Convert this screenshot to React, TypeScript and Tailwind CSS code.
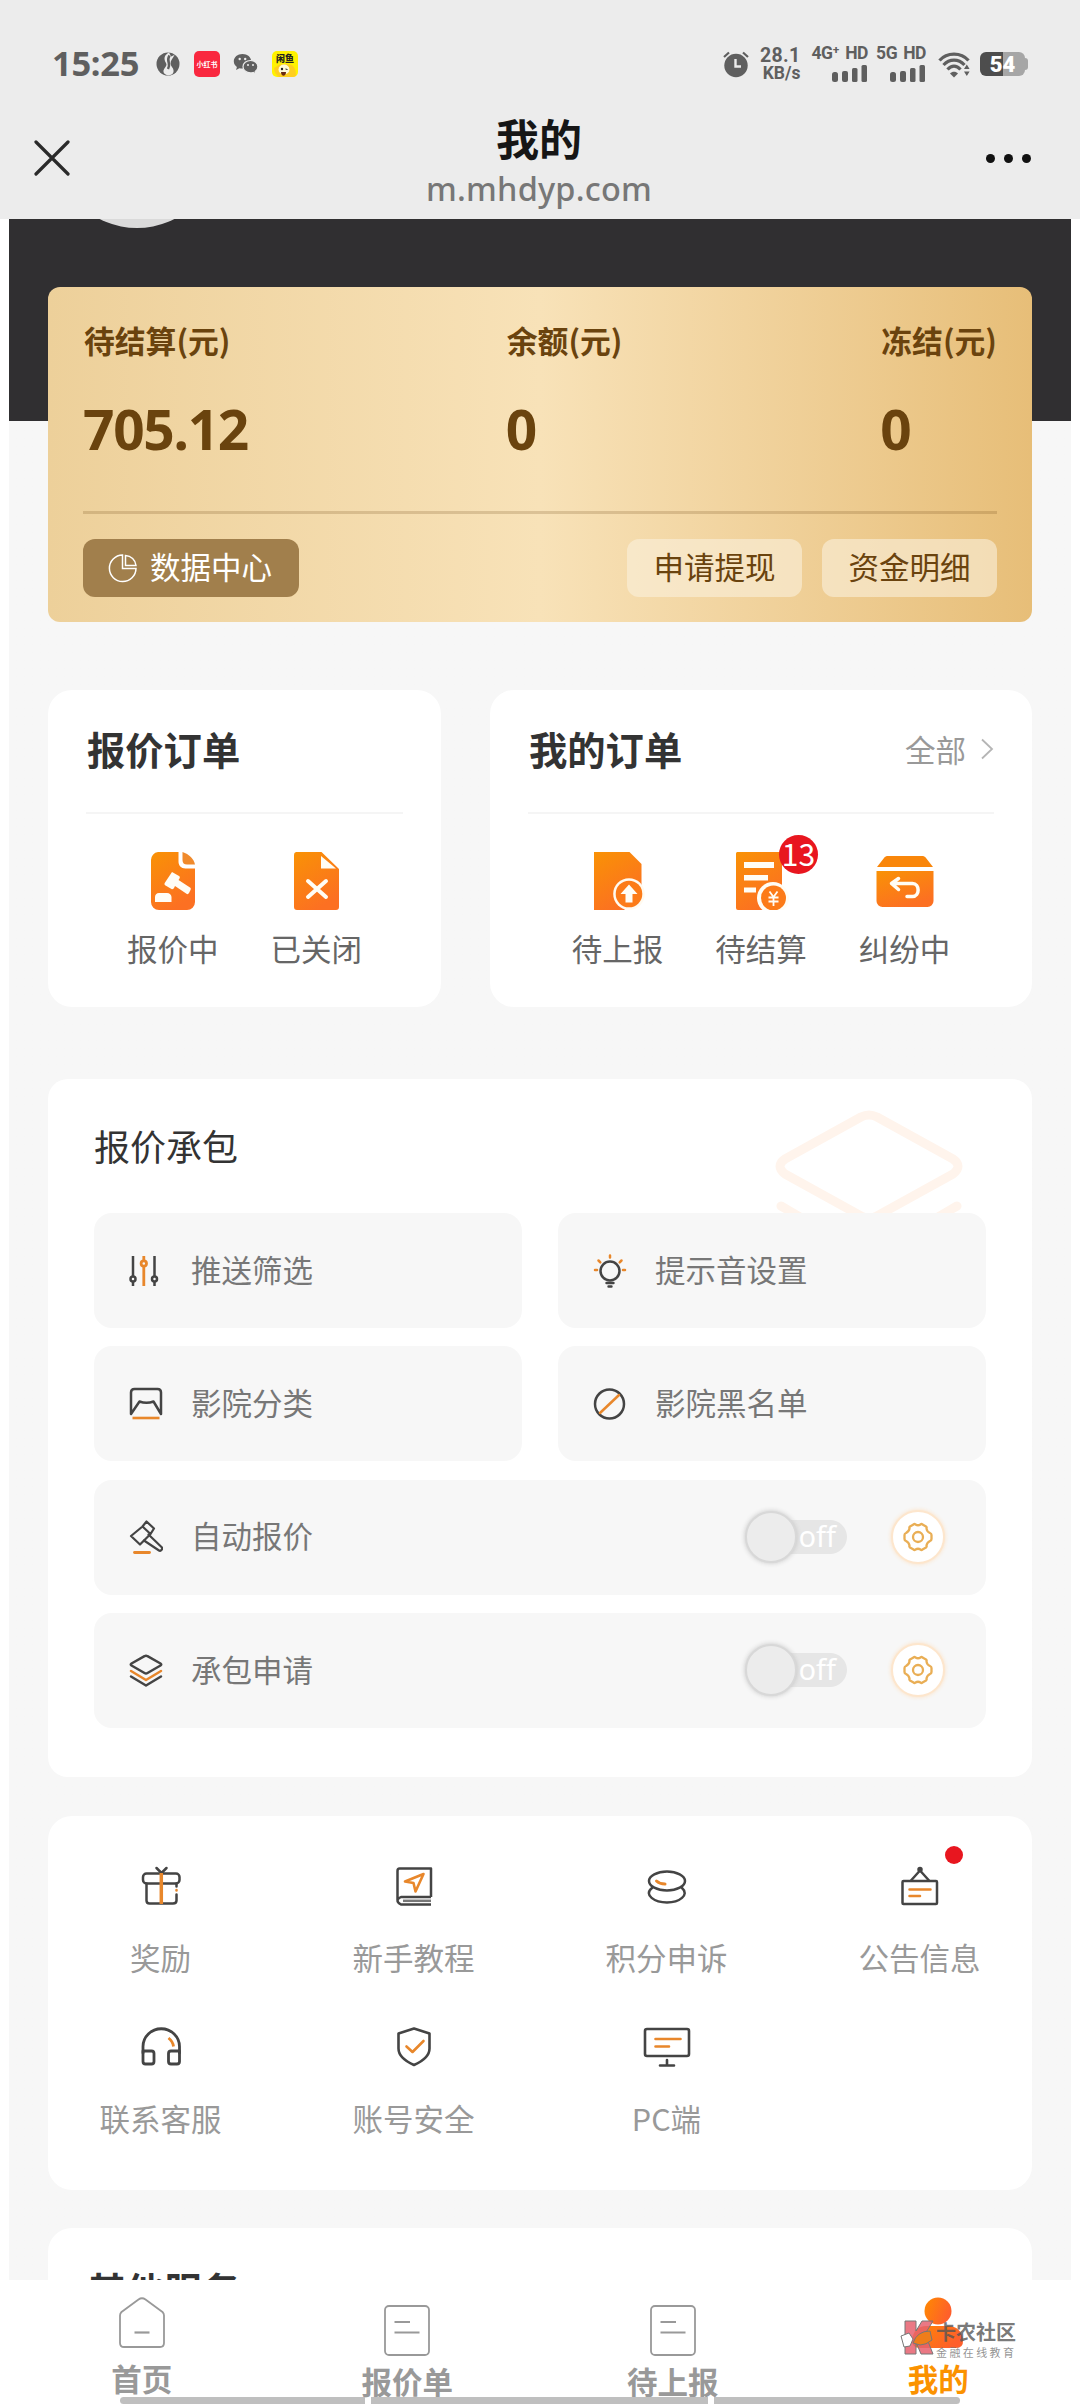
import type { ReactNode } from 'react'

const DARK = '#444444'
const ORANGE = '#e8872b'

/* ---------- STATUS BAR ---------- */

function Signal({ label, sup }: { label: string; sup?: string }) {
  return (
    <div className="flex flex-col items-end gap-1">
      <p className="font-['Roboto','Noto_Sans_CJK_SC',sans-serif] text-[17.5px] leading-[15px] font-bold whitespace-nowrap tracking-tight">
        {label}{sup}<span className="ml-1.5">HD</span>
      </p>
      <svg width="36" height="17" viewBox="0 0 36 17" fill="#5f5f5f">
        <rect x="0" y="7" width="6" height="10" rx="2.5" />
        <rect x="10" y="6" width="6" height="11" rx="2" />
        <rect x="20" y="3" width="5.5" height="14" rx="1.5" />
        <rect x="29.5" y="0" width="5.5" height="17" rx="1.5" />
      </svg>
    </div>
  )
}

function StatusBar() {
  return (
    <div className="flex h-[104px] items-center justify-between pt-6 pl-[52px] pr-[52px] text-[#5f5f5f]">
      <div className="flex items-center">
        <span className="w-[90px] pb-0.5 font-['Noto_Sans','Noto_Sans_CJK_SC',sans-serif] text-[34.5px] leading-none font-bold tracking-[-0.3px]">15:25</span>
        <svg className="ml-3.5" width="24" height="26" viewBox="0 0 24 26">
          <circle cx="12" cy="13" r="11.5" fill="#5f5f5f" />
          <path d="M13 1.500C8 4 7.500 8 10 12c2 3.500-3 5-2.500 9 .5 4 9 4.500 10 0 .8-4-3-5.500-3-8.500 0-3 2.500-5.500 4-8.500l-3.500 1.500z" fill="#ececec" />
          <path d="M13.500 4.500c-2 3-1.500 5-.7 7.500.7 2.500.2 4-.8 6" stroke="#5f5f5f" strokeWidth="2.500" fill="none" />
        </svg>
        <div className="ml-3.5 flex h-[26px] w-[26px] items-center justify-center rounded-[5px] bg-[#f9283f]">
          <span className="text-[7px] leading-none font-bold whitespace-nowrap text-white">小红书</span>
        </div>
        <svg className="ml-[13px]" width="26" height="22" viewBox="0 0 26 22">
          <path fill="#5f5f5f" d="M9.500 1C4.500 1 .8 4.200.8 8.300c0 2.300 1.200 4.300 3.100 5.700l-.8 2.900 3.300-1.700c1 .3 2 .4 3.100.4 5 0 8.700-3.200 8.700-7.300S14.500 1 9.500 1z" />
          <path fill="#5f5f5f" stroke="#ececec" strokeWidth="1.200" d="M17.500 7.500c-4.200 0-7.500 2.800-7.500 6.200s3.300 6.200 7.500 6.200c.9 0 1.800-.1 2.600-.4l2.800 1.500-.7-2.500c1.600-1.100 2.700-2.800 2.700-4.800 0-3.400-3.200-6.200-7.400-6.200z" />
          <g fill="#ececec">
            <circle cx="6.700" cy="6" r="1.200" /><circle cx="12.200" cy="6" r="1.200" />
            <circle cx="15" cy="12" r="1" /><circle cx="20" cy="12" r="1" />
          </g>
        </svg>
        <div className="ml-[13px] flex h-[26px] w-[26px] flex-col items-center overflow-hidden rounded-[5px] bg-[#fff200] pt-[3px]">
          <span className="text-[9px] leading-[9px] font-black whitespace-nowrap text-[#222]">闲鱼</span>
          <svg width="24" height="14" viewBox="0 0 24 14">
            <path d="M1 5c3-1 4-4 9-4s7 0 10 2c3 3 3 7 3 11H6C3 12 1 9 1 5z" fill="#ffcf1f" />
            <ellipse cx="11" cy="6.500" rx="5.500" ry="5" fill="#fff9d8" />
            <circle cx="9" cy="6" r="1.200" fill="#222" />
            <path d="M12.500 6l2 .5" stroke="#222" />
            <path d="M8 9h5c0 5-5 5-5 0z" fill="#6b2a10" />
          </svg>
        </div>
      </div>

      <div className="flex items-center">
        <svg width="26" height="27" viewBox="0 0 26 27">
          <circle cx="13" cy="14.500" r="11.700" fill="#5f5f5f" />
          <path d="M1 6l5-4.500M25 6l-5-4.500" stroke="#5f5f5f" strokeWidth="2.200" />
          <path d="M12.500 8v7.500H18" stroke="#ececec" strokeWidth="2.400" fill="none" />
        </svg>
        <div className="ml-[11px] flex w-10 flex-col items-end font-['Roboto','Noto_Sans_CJK_SC',sans-serif] font-bold">
          <span className="text-[19.500px] leading-[18px] tracking-[0.3px]">28.1</span>
          <span className="text-[17.500px] leading-[17px]">KB/s</span>
        </div>
        <div className="ml-[11px]"><Signal label="4G" sup="⁺" /></div>
        <div className="ml-2"><Signal label="5G" /></div>
        <svg className="ml-3" width="33" height="27" viewBox="0 0 33 27">
          <g fill="none" stroke="#5f5f5f" strokeWidth="3.200">
            <path d="M1.500 9.500C9 1 23 1 30.500 9.500" />
            <path d="M5.500 14C11.500 7.500 20.500 7.500 26.500 14" />
            <path d="M9.500 18.500c4-4.500 9-4.500 13 0" />
          </g>
          <path d="M12 22.500c2.200-2.300 5.800-2.300 8 0L16 26.500z" fill="#5f5f5f" />
          <path d="M26 18l2.800-4.500 2.800 4.500zM26 20.500l2.800 4.500 2.800-4.500z" fill="#5f5f5f" />
        </svg>
        <div className="ml-[9px] flex items-center">
          <div className="flex h-6 w-[45px] items-center justify-center rounded-[6px] bg-linear-to-r from-[#4d4d4d] from-52% to-[#a6a6a6] to-52%">
            <span className="pt-px font-['Roboto','Noto_Sans_CJK_SC',sans-serif] text-[22px] leading-none font-black text-white">54</span>
          </div>
          <span className="h-3 w-[3px] rounded-r-full bg-[#a6a6a6]" />
        </div>
      </div>
    </div>
  )
}

function TitleBar() {
  return (
    <div className="grid h-[115px] grid-cols-[1fr_auto_1fr] items-center pr-[49px] pb-[7px] pl-[34px]">
      <svg width="36" height="36" viewBox="0 0 36 36" stroke="#2a2a2a" strokeWidth="3.200" strokeLinecap="round">
        <path d="M2 2l32 32M34 2L2 34" />
      </svg>
      <div className="-mr-3.5 -ml-px flex flex-col items-center gap-[7px] pt-2">
        <h1 className="text-[43px] leading-[46px] font-bold text-[#161616]">我的</h1>
        <p className="font-['Noto_Sans','Noto_Sans_CJK_SC',sans-serif] text-[32.500px] leading-[44px] font-medium tracking-[0.2px] text-[#777]">m.mhdyp.com</p>
      </div>
      <div className="flex items-center gap-[9px] justify-self-end">
        <span className="h-[9px] w-[9px] rounded-full bg-[#111]" />
        <span className="h-[9px] w-[9px] rounded-full bg-[#111]" />
        <span className="h-[9px] w-[9px] rounded-full bg-[#111]" />
      </div>
    </div>
  )
}

/* ---------- BALANCE ---------- */

const balances = [
  { label: '待结算(元)', value: '705.12' },
  { label: '余额(元)', value: '0' },
  { label: '冻结(元)', value: '0' },
]

function BalanceCard() {
  return (
    <section className="relative mx-[39px] h-[335px] rounded-xl bg-linear-to-r from-[#edd09a] via-[#f8e2b8] to-[#e7be78] px-[35px] pt-[37px] text-[#6a430e]">
      <div className="flex justify-between">
        {balances.map(b => (
          <div key={b.label}>
            <p className="ml-px text-[30.800px] leading-[32px] font-bold">{b.label}</p>
            <p className="mt-[33px] font-['Noto_Sans','Noto_Sans_CJK_SC',sans-serif] text-[55px] leading-[80px] font-bold tracking-[-1.300px]">{b.value}</p>
          </div>
        ))}
      </div>
      <div className="mt-[42px] h-[3px] bg-[#6a430e]/20" />
      <div className="mt-[25px] flex h-[58px] gap-5 text-[30.500px] leading-none">
        <button className="mr-auto flex w-[216px] items-center gap-3 rounded-xl bg-[#a17f4c] pl-[25px] text-white">
          <svg width="30" height="30" viewBox="0 0 30 30" fill="none" stroke="#fff" strokeWidth="1.500">
            <path d="M14.500 2A13.300 13.300 0 1 0 28 15.500H14.500z" />
            <path d="M17.500 2.500v10h10.500A11 11 0 0 0 17.500 2.500z" />
          </svg>
          <span className="pb-[3px]">数据中心</span>
        </button>
        <button className="w-[175px] rounded-xl bg-[#faf0dc]/60 pb-[3px]">申请提现</button>
        <button className="w-[175px] rounded-xl bg-[#faf0dc]/60 pb-[3px]">资金明细</button>
      </div>
    </section>
  )
}

/* ---------- ORDERS ---------- */

function OrangeGradient({ id }: { id: string }) {
  return (
    <defs>
      <linearGradient id={id} x1="0" y1="0" x2=".5" y2="1">
        <stop offset="0" stopColor="#f99205" />
        <stop offset="1" stopColor="#fc7022" />
      </linearGradient>
    </defs>
  )
}

function BidIcon() {
  return (
    <svg width="58" height="58" viewBox="0 0 58 58">
      <OrangeGradient id="g-bid" />
      <path d="M14 0H34.500v9.500c0 4 2.500 7 7 7H51V50a8 8 0 0 1-8 8H15a8 8 0 0 1-8-8V8a8 8 0 0 1 7-8z" fill="url(#g-bid)" />
      <path d="M38.500 0C45 2 50 7 51 12.500h-8c-3 0-4.500-1.500-4.500-4.500z" fill="#f08a2c" />
      <g fill="#fffdf5">
        <path d="M28 20l7 4c1 .5 1 1.500.5 2.500l-1 1.500 11.500 7.500c1 .7 1 1.500.5 2.500l-1.500 3c-.5 1-1.500 1.500-2.500.8L31 34l-1 2c-.5 1-1.500 1.500-2.500 1l-6-3.500c-1-.5-1.300-1.500-.8-2.500z" />
        <path d="M11 50v-5c0-2 1.500-4 4-4h8c2.500 0 4.500 2 4.500 4v5z" />
      </g>
    </svg>
  )
}

function ClosedIcon() {
  return (
    <svg width="58" height="58" viewBox="0 0 58 58">
      <OrangeGradient id="g-closed" />
      <path d="M9 0H34.500L52 17v38a3 3 0 0 1-3 3H10a3 3 0 0 1-3-3V3a3 3 0 0 1 2-3z" fill="url(#g-closed)" />
      <path d="M34 4v12.500h15z" fill="#fffdf5" />
      <path d="M21 29l18 16M39 29L21 45" stroke="#fffdf5" strokeWidth="4" strokeLinecap="round" />
    </svg>
  )
}

function ReportIcon() {
  return (
    <svg width="58" height="58" viewBox="0 0 58 58">
      <OrangeGradient id="g-report" />
      <path d="M5 0H40.500L52.500 12v30L35 58H5z" fill="url(#g-report)" />
      <circle cx="40" cy="42" r="15.800" fill="#fffaf0" />
      <circle cx="40" cy="42" r="13.300" fill="#fc7b18" />
      <path d="M40 32.500l8.500 9.500h-5v8.500h-7V42h-5z" fill="#fffdf5" />
    </svg>
  )
}

function SettleIcon() {
  return (
    <svg width="58" height="58" viewBox="0 0 58 58">
      <OrangeGradient id="g-settle" />
      <path d="M5 0H50V58H6a2 2 0 0 1-2-2V2a2 2 0 0 1 1-2z" fill="url(#g-settle)" />
      <g fill="#fffdf5">
        <rect x="12" y="10" width="30" height="6" />
        <rect x="12" y="23" width="24" height="5.500" />
        <rect x="12" y="35.500" width="12" height="5" />
        <circle cx="41" cy="46" r="16" />
      </g>
      <circle cx="41.500" cy="46" r="12.500" fill="#fc7b18" />
      <path d="M37.500 39.500l4 5.500 4-5.500M41.500 45v9M36.500 45.500h10M36.500 49.500h10" stroke="#fffdf5" strokeWidth="1.800" fill="none" />
    </svg>
  )
}

function DisputeIcon() {
  return (
    <svg width="58" height="58" viewBox="0 0 58 58">
      <OrangeGradient id="g-dispute" />
      <path d="M8 6c1-1.500 2.500-2 4-2h34c1.500 0 3 .5 4 2l7 9H1z" fill="#f9860a" />
      <path d="M.5 19h57v30a6 6 0 0 1-6 6h-45a6 6 0 0 1-6-6z" fill="url(#g-dispute)" />
      <path d="M22.500 26.500l-7 5 7 6M16.500 31.500h20c7.500 0 7.500 13 0 13H31" stroke="#fffdf5" strokeWidth="3.500" strokeLinecap="round" strokeLinejoin="round" fill="none" />
    </svg>
  )
}

function OrderItem({ icon, label, badge }: { icon: ReactNode; label: string; badge?: number }) {
  return (
    <div className="flex w-[143.500px] flex-col items-center">
      <div className="relative h-[58px]">
        {icon}
        {badge && (
          <span className="absolute -top-[17px] left-[47px] flex h-[39px] w-[39px] items-center justify-center rounded-full bg-[#e8161f] pb-[3px] text-[30px] leading-none text-white">
            {badge}
          </span>
        )}
      </div>
      <p className="mt-[20px] text-[30.500px] leading-9 text-[#666]">{label}</p>
    </div>
  )
}

function OrderCards() {
  return (
    <div className="mx-[39px] mt-[68px] flex h-[317px] justify-between">
      <section className="w-[393px] rounded-3xl bg-white px-[38px] pt-[37px]">
        <h2 className="ml-px text-[38.300px] leading-[44px] font-bold text-[#333]">报价订单</h2>
        <div className="mt-[41px] h-[2px] bg-[#f5f5f5]" />
        <div className="mt-[38px] -mx-2 flex justify-center">
          <OrderItem icon={<BidIcon />} label="报价中" />
          <OrderItem icon={<ClosedIcon />} label="已关闭" />
        </div>
      </section>

      <section className="w-[542px] rounded-3xl bg-white px-[38px] pt-[37px]">
        <div className="flex items-center justify-between">
          <h2 className="ml-px text-[38.300px] leading-[44px] font-bold text-[#333]">我的订单</h2>
          <a className="flex items-center gap-3.5 text-[30.500px] leading-none text-[#999]">
            全部
            <svg width="14" height="22" viewBox="0 0 14 22" fill="none" stroke="#b5b5b5" strokeWidth="1.800">
              <path d="M2 1.500L12 11 2 20.500" />
            </svg>
          </a>
        </div>
        <div className="mt-[41px] h-[2px] bg-[#f5f5f5]" />
        <div className="mt-[38px] flex justify-center">
          <OrderItem icon={<ReportIcon />} label="待上报" />
          <OrderItem icon={<SettleIcon />} label="待结算" badge={13} />
          <OrderItem icon={<DisputeIcon />} label="纠纷中" />
        </div>
      </section>
    </div>
  )
}

/* ---------- QUOTE PACKAGE ---------- */

function Icon({ children, size = 34 }: { children: ReactNode; size?: number }) {
  return (
    <svg width={size} height={size} viewBox={`0 0 ${size} ${size}`} fill="none" stroke={DARK} strokeWidth="2.500" strokeLinejoin="round" strokeLinecap="round" className="shrink-0">
      {children}
    </svg>
  )
}

const filterIcon = (
  <Icon>
    <path d="M4 2v20M4 28v4M25.500 2v20M25.500 28v4" strokeLinecap="butt" />
    <circle cx="4" cy="25" r="2.500" /><circle cx="25.500" cy="25" r="2.500" />
    <g stroke={ORANGE} strokeWidth="2.800"><path d="M14.800 2v4M14.800 13v19" strokeLinecap="butt" /><circle cx="14.800" cy="9.500" r="2.700" /></g>
  </Icon>
)

const bulbIcon = (
  <Icon>
    <circle cx="17" cy="17" r="9.500" />
    <path d="M13.500 29h7M15.500 32.500h3" strokeWidth="2.400" />
    <path d="M17 1.500v2M5.500 6.500l1.800 1.800M28.500 6.500l-1.800 1.800M2 16h2M30 16h2" stroke={ORANGE} />
  </Icon>
)

const cinemaIcon = (
  <Icon>
    <path d="M2 27V5.500C2 3 3 2 5.500 2h23C31 2 32 3 32 5.500V27L24.500 14.500c-4 1.500-10 1.500-14 0z" />
    <path d="M3.500 31h27" stroke={ORANGE} strokeWidth="2.600" strokeLinecap="butt" />
  </Icon>
)

const banIcon = (
  <Icon>
    <circle cx="16.500" cy="17" r="14.500" />
    <path d="M7 26L26 8" stroke={ORANGE} />
  </Icon>
)

const gavelIcon = (
  <Icon>
    <path d="M17.500 1.500l7.500 7-3.500 5.500-8-7.500zM13.500 6.500l8 7.500L11 24.500 2 16z" strokeWidth="2.200" />
    <path d="M19.500 14.500L33 27.500c1 1.500-1.500 4-3 3L15 20.500" strokeWidth="2.200" />
    <path d="M5.500 32.500h15" stroke={ORANGE} strokeWidth="2.800" />
  </Icon>
)

const layersIcon = (
  <Icon>
    <path d="M15.500 3.200q1.500-.9 3 0L31.500 10.500q1.500 1 0 2L18.500 20q-1.500.9-3 0L2.500 12.500q-1.500-1 0-2z" />
    <path d="M2 18l15 9 15-9" stroke={ORANGE} />
    <path d="M2 23.500l15 9 15-9" />
  </Icon>
)

const tiles = [
  { label: '推送筛选', icon: filterIcon },
  { label: '提示音设置', icon: bulbIcon },
  { label: '影院分类', icon: cinemaIcon },
  { label: '影院黑名单', icon: banIcon },
]

const switches = [
  { label: '自动报价', icon: gavelIcon },
  { label: '承包申请', icon: layersIcon },
]

function Gear() {
  return (
    <div className="flex h-[54px] w-[54px] items-center justify-center rounded-full border-2 border-[#fde6cd] bg-white shadow-[0_0_4px_#fde0c0]">
      <svg width="30" height="30" viewBox="0 0 30 30" fill="none" stroke="#e9ae55" strokeWidth="2.300" strokeLinejoin="round">
        <path d="M10.500 2.500q1-1 2 0 2.500 1.500 5 0 1-1 2 0l3.500 2q1 .8.500 2 .3 3 3.500 4.500 1.500.5 1.500 2v4q0 1.500-1.500 2-3 1.500-3.500 4.500.5 1.200-.5 2l-3.500 2q-1 1-2 0-2.500-1.500-5 0-1 1-2 0l-3.500-2q-1-.8-.5-2-.5-3-3.500-4.500-1.500-.5-1.500-2v-4q0-1.500 1.500-2 3-1.500 3.500-4.500-.5-1.200.5-2z" />
        <circle cx="15" cy="15" r="5" />
      </svg>
    </div>
  )
}

function Toggle() {
  return (
    <div className="relative flex h-[34px] w-[88px] items-center justify-end rounded-full bg-[#e6e6e6] pr-[11px]">
      <span className="pb-1 font-['Noto_Sans','Noto_Sans_CJK_SC',sans-serif] text-[29px] leading-none text-white">off</span>
      <span className="absolute top-1/2 -left-[14px] h-[52px] w-[52px] -translate-y-1/2 rounded-full border-2 border-[#d8d8d8] bg-[#ececec] shadow-[0_0_5px_#c4c4c4]" />
    </div>
  )
}

function PackageCard() {
  return (
    <section className="relative mx-[39px] mt-[72px] h-[698px] rounded-[20px] bg-white px-[46px] pt-[44px]">
      <svg className="absolute top-[27px] right-[67px]" width="192" height="107" viewBox="0 0 192 107" fill="none" stroke="#fff4ec" strokeWidth="9" strokeLinejoin="round" strokeLinecap="round">
        <path d="M88 11q8-4 16 0l76 42q10 7 0 15l-76 42q-8 4-16 0L12 68q-10-8 0-15z" />
        <path d="M8 100l24 14M184 100l-24 14" />
      </svg>
      <h2 className="text-[36px] leading-[44px] text-[#333]">报价承包</h2>
      <div className="relative mt-[46px] grid grid-cols-2 gap-x-9 gap-y-[18.300px]">
        {tiles.map(t => (
          <div key={t.label} className="flex h-[115px] items-center gap-7 rounded-[18px] bg-[#f7f7f7] pl-[35px] text-[30.500px] leading-none text-[#777]">
            {t.icon}
            <span className="pb-[3px]">{t.label}</span>
          </div>
        ))}
        {switches.map(s => (
          <div key={s.label} className="col-span-2 flex h-[115px] items-center gap-7 rounded-[18px] bg-[#f7f7f7] pr-[41px] pl-[35px] text-[30.500px] leading-none text-[#777]">
            {s.icon}
            <span className="pb-[3px]">{s.label}</span>
            <div className="ml-auto flex items-center gap-11">
              <Toggle />
              <Gear />
            </div>
          </div>
        ))}
      </div>
    </section>
  )
}

/* ---------- SERVICES ---------- */

const giftIcon = (
  <Icon size={44}>
    <rect x="4" y="8.500" width="36.500" height="10" rx="3.500" />
    <path d="M7.500 18.500v17q0 3 3 3H34q3.500 0 3.500-3v-6M37.500 18.500v3" />
    <path d="M17.500 3l5 5 5-5" />
    <path d="M22.300 8v31" stroke={ORANGE} strokeWidth="3.500" strokeLinecap="butt" />
    <path d="M37.500 25v.5" stroke={ORANGE} />
  </Icon>
)

const bookIcon = (
  <Icon size={44}>
    <path d="M39 32V3.500H7.500Q5.500 3.500 5.500 6v29M39 32H9q-7 3.500 0 7.500h30" strokeLinecap="butt" />
    <path d="M11 35.800h28" stroke="#777" strokeWidth="2.500" strokeLinecap="butt" />
    <path d="M31.500 9L13 16.500l8.500 1.500 2 8.500z" stroke={ORANGE} strokeWidth="2.600" />
  </Icon>
)

const coinsIcon = (
  <Icon size={44}>
    <ellipse cx="22" cy="16" rx="18" ry="9.500" />
    <path d="M7 23c-9 7 3 14.500 15 14.500S45 30 37 23" />
    <path d="M11.500 16q3 3 8.500 3" stroke={ORANGE} strokeWidth="3" />
  </Icon>
)

const noticeIcon = (
  <Icon size={44}>
    <rect x="4.500" y="16" width="34.500" height="23" rx="1" />
    <path d="M13 15.500l9-10 9 10" />
    <circle cx="22" cy="4.500" r="1.500" fill={DARK} />
    <path d="M11.500 24.500h21M11.500 31h10.500" stroke={ORANGE} />
  </Icon>
)

const headsetIcon = (
  <Icon size={44}>
    <g strokeWidth="2.800">
      <path d="M4 27V20.500a18 17.500 0 0 1 36.500 0V27" />
      <path d="M4 25h8.500q2.500 0 2.500 2.500v8q0 2.500-2.500 2.500H6.500q-2.500 0-2.500-2.500zM40.500 25H32q-2.500 0-2.500 2.500v8q0 2.500 2.500 2.500h6q2.500 0 2.500-2.500z" />
    </g>
    <path d="M29.500 12q4.500 3.500 5 8.500" stroke={ORANGE} strokeWidth="2.800" strokeLinecap="butt" />
  </Icon>
)

const shieldIcon = (
  <Icon size={44}>
    <path d="M22 2.500l15.500 5v15C37.500 30 31 35 22 39 13 35 6.500 30 6.500 22.500v-15z" strokeWidth="2.600" />
    <path d="M14.500 20.500l6 5.500 11-11" stroke={ORANGE} strokeWidth="2.600" />
  </Icon>
)

const pcIcon = (
  <svg width="48" height="44" viewBox="0 0 48 44" fill="none" stroke={DARK} strokeWidth="2.600" strokeLinecap="round">
    <rect x="2" y="3" width="44" height="27" rx="2" />
    <path d="M24 34v5M17 39.500h14" />
    <path d="M12.500 13h25M12.500 20.500h13.500" stroke={ORANGE} />
  </svg>
)

const services = [
  { label: '奖励', icon: giftIcon },
  { label: '新手教程', icon: bookIcon },
  { label: '积分申诉', icon: coinsIcon },
  { label: '公告信息', icon: noticeIcon, dot: true },
  { label: '联系客服', icon: headsetIcon },
  { label: '账号安全', icon: shieldIcon },
  { label: 'PC端', icon: pcIcon },
]

function ServicesCard() {
  return (
    <section className="mx-[39px] mt-[39px] h-[374px] rounded-3xl bg-white pt-[49px]">
      <div className="-mx-3.5 grid grid-cols-4 gap-y-[33px]">
        {services.map(s => (
          <div key={s.label} className="flex h-32 flex-col items-center">
            <div className="relative">
              {s.icon}
              {s.dot && <span className="absolute -top-[19px] left-[47px] h-[18px] w-[18px] rounded-full bg-[#e8161f]" />}
            </div>
            <p className="mt-[30px] text-[30.500px] leading-9 text-[#999]">{s.label}</p>
          </div>
        ))}
      </div>
    </section>
  )
}

/* ---------- TAB BAR ---------- */

function DocIcon() {
  return (
    <svg width="48" height="54" viewBox="0 0 48 54" fill="none" stroke="#999" strokeWidth="1.800">
      <rect x="2" y="2" width="44" height="49" rx="4" />
      <path d="M11.500 18H27M11.500 28.500h25" strokeWidth="2.200" />
    </svg>
  )
}

function TabBar() {
  return (
    <nav className="relative flex h-32 bg-white px-[9px] text-[30.500px] leading-9 font-bold text-[#999]">
      <a className="flex flex-1 flex-col items-center pt-4">
        <svg width="48" height="54" viewBox="0 0 48 54" fill="none" stroke="#999" strokeWidth="1.800" strokeLinejoin="round">
          <path d="M2 19.500q0-2 1.500-3.500L20.500 3.500q3.500-2.500 7 0L44.500 16q1.500 1.500 1.500 3.500V47q0 4-4 4H6q-4 0-4-4z" />
          <path d="M16.500 36.500h15" strokeWidth="2.200" />
        </svg>
        <span className="mt-2.5">首页</span>
      </a>
      <a className="flex flex-1 flex-col items-center pt-6">
        <DocIcon />
        <span className="mt-[5px]">报价单</span>
      </a>
      <a className="flex flex-1 flex-col items-center pt-6">
        <DocIcon />
        <span className="mt-[5px]">待上报</span>
      </a>
      <a className="flex flex-1 flex-col items-center pt-4 text-[#fb9200]">
        <svg width="56" height="54" viewBox="0 0 56 54">
          <defs>
            <linearGradient id="g-me" x1="0" y1="0" x2="1" y2=".4">
              <stop offset="0" stopColor="#ff8a00" />
              <stop offset="1" stopColor="#fe5f2c" />
            </linearGradient>
          </defs>
          <circle cx="28" cy="15" r="13.500" fill="url(#g-me)" />
          <path d="M2 44q2-14 14-14h22q13 0 15 14 .5 8-7 8H10q-8 0-8-8z" fill="url(#g-me)" />
        </svg>
        <span className="mt-2.5">我的</span>
      </a>

      {/* community stamp over the last tab */}
      <div className="absolute top-[39px] left-[899px] flex items-start gap-1 whitespace-nowrap">
        <svg width="37" height="38" viewBox="0 0 37 38" stroke="#777" strokeWidth="1">
          <path d="M6 2h11v10l6-10h11l-8 13 8 20H22l-5-12v12H6V24z" fill="#e6606e" fillOpacity=".85" />
          <path d="M14 24q4-12 17-12l2 9q-6 5-12 5z" fill="#ef7d1a" />
          <path d="M2 17l8-3 4 6-3 7-6 1z" fill="#fff" />
        </svg>
        <div className="-ml-1 flex flex-col">
          <span className="text-[20px] leading-[25px] font-bold text-[#555]/80">卡农社区</span>
          <span className="text-[11px] leading-[16px] font-normal tracking-[2.400px] text-[#777]/80">金融在线教育</span>
        </div>
      </div>

      {/* system home indicator */}
      <div className="absolute bottom-1 left-[120px] flex h-[7px] w-[840px] gap-1.5">
        <span className="w-[245px] rounded-l-full bg-[#bfbfbf]" />
        <span className="w-[337px] bg-[#bfbfbf]" />
        <span className="flex-1 rounded-r-full bg-[#bfbfbf]" />
      </div>
    </nav>
  )
}

export default function App() {
  return (
    <div className="h-[2408px] w-[1080px] overflow-hidden bg-white font-['Noto_Sans_CJK_SC',sans-serif]">
      <header className="h-[219px] bg-[#ececec]">
        <StatusBar />
        <TitleBar />
      </header>

      <main className="mx-[9px] h-[2061px] overflow-hidden bg-[#f7f7f7] bg-linear-to-b from-[#302f31] from-[202px] to-[#f7f7f7] to-[202px]">
        {/* bottom edge of the scrolled-away avatar */}
        <div className="h-[68px] overflow-hidden">
          <div className="-mt-[155px] ml-[46px] h-[164px] w-[164px] rounded-full bg-[#dadada]" />
        </div>
        <BalanceCard />
        <OrderCards />
        <PackageCard />
        <ServicesCard />
        <section className="mx-[39px] mt-[38px] h-[200px] rounded-3xl bg-white px-10 pt-[39px]">
          <h2 className="text-[38px] leading-[44px] font-bold text-[#333]">其他服务</h2>
        </section>
      </main>

      <TabBar />
    </div>
  )
}
